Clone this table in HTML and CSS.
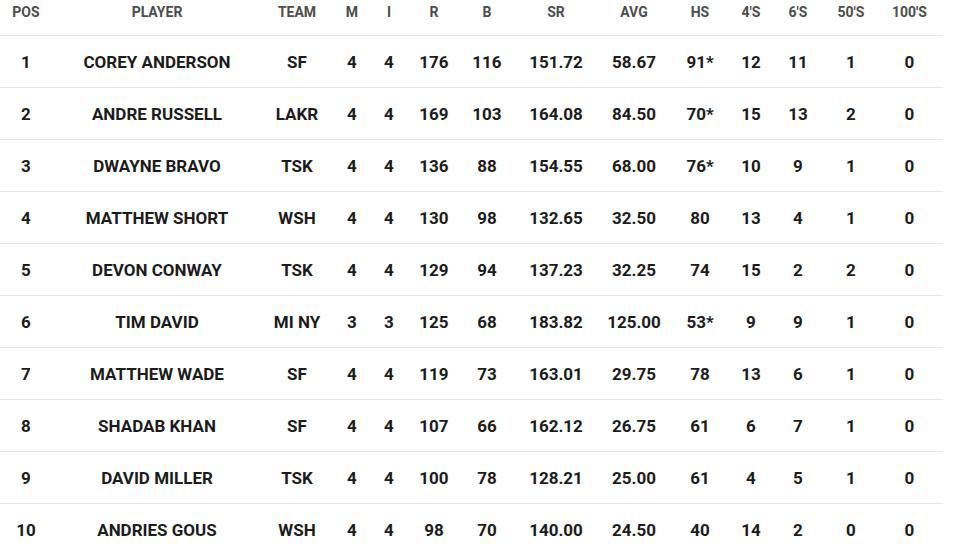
FILE: index.html
```html
<!DOCTYPE html>
<html>
<head>
<meta charset="utf-8">
<link rel="stylesheet" href="styles.css">
</head>
<body>
<table class="stats">
<colgroup>
<col class="c-pos"><col class="c-player"><col class="c-team"><col class="c-m"><col class="c-i"><col class="c-r"><col class="c-b"><col class="c-sr"><col class="c-avg"><col class="c-hs"><col class="c-4s"><col class="c-6s"><col class="c-50s"><col class="c-100s">
</colgroup>
<thead>
<tr><th>POS</th><th>PLAYER</th><th>TEAM</th><th>M</th><th>I</th><th>R</th><th>B</th><th>SR</th><th>AVG</th><th>HS</th><th>4'S</th><th>6'S</th><th>50'S</th><th>100'S</th></tr>
</thead>
<tbody>
<tr><td>1</td><td>COREY ANDERSON</td><td>SF</td><td>4</td><td>4</td><td>176</td><td>116</td><td>151.72</td><td>58.67</td><td>91*</td><td>12</td><td>11</td><td>1</td><td>0</td></tr>
<tr><td>2</td><td>ANDRE RUSSELL</td><td>LAKR</td><td>4</td><td>4</td><td>169</td><td>103</td><td>164.08</td><td>84.50</td><td>70*</td><td>15</td><td>13</td><td>2</td><td>0</td></tr>
<tr><td>3</td><td>DWAYNE BRAVO</td><td>TSK</td><td>4</td><td>4</td><td>136</td><td>88</td><td>154.55</td><td>68.00</td><td>76*</td><td>10</td><td>9</td><td>1</td><td>0</td></tr>
<tr><td>4</td><td>MATTHEW SHORT</td><td>WSH</td><td>4</td><td>4</td><td>130</td><td>98</td><td>132.65</td><td>32.50</td><td>80</td><td>13</td><td>4</td><td>1</td><td>0</td></tr>
<tr><td>5</td><td>DEVON CONWAY</td><td>TSK</td><td>4</td><td>4</td><td>129</td><td>94</td><td>137.23</td><td>32.25</td><td>74</td><td>15</td><td>2</td><td>2</td><td>0</td></tr>
<tr><td>6</td><td>TIM DAVID</td><td>MI NY</td><td>3</td><td>3</td><td>125</td><td>68</td><td>183.82</td><td>125.00</td><td>53*</td><td>9</td><td>9</td><td>1</td><td>0</td></tr>
<tr><td>7</td><td>MATTHEW WADE</td><td>SF</td><td>4</td><td>4</td><td>119</td><td>73</td><td>163.01</td><td>29.75</td><td>78</td><td>13</td><td>6</td><td>1</td><td>0</td></tr>
<tr><td>8</td><td>SHADAB KHAN</td><td>SF</td><td>4</td><td>4</td><td>107</td><td>66</td><td>162.12</td><td>26.75</td><td>61</td><td>6</td><td>7</td><td>1</td><td>0</td></tr>
<tr><td>9</td><td>DAVID MILLER</td><td>TSK</td><td>4</td><td>4</td><td>100</td><td>78</td><td>128.21</td><td>25.00</td><td>61</td><td>4</td><td>5</td><td>1</td><td>0</td></tr>
<tr><td>10</td><td>ANDRIES GOUS</td><td>WSH</td><td>4</td><td>4</td><td>98</td><td>70</td><td>140.00</td><td>24.50</td><td>40</td><td>14</td><td>2</td><td>0</td><td>0</td></tr>
</tbody>
</table>
</body>
</html>
```

FILE: styles.css
```css
html, body {
  margin: 0;
  padding: 0;
  background: #ffffff;
}

.stats {
  border-collapse: collapse;
  table-layout: fixed;
  width: 943px;
  font-family: Roboto, "Liberation Sans", sans-serif;
  font-weight: 700;
}

.c-pos { width: 52px; }
.c-player { width: 210px; }
.c-team { width: 70px; }
.c-m { width: 40px; }
.c-i { width: 34px; }
.c-r { width: 56px; }
.c-b { width: 50px; }
.c-sr { width: 88px; }
.c-avg { width: 68px; }
.c-hs { width: 64px; }
.c-4s { width: 38px; }
.c-6s { width: 56px; }
.c-50s { width: 50px; }
.c-100s { width: 67px; }

.stats th {
  height: 35px;
  padding: 0;
  vertical-align: top;
  text-align: center;
  font-size: 14px;
  line-height: 24px;
  color: #4d4d4d;
  white-space: nowrap;
}

.stats td {
  height: 51px;
  padding: 0;
  text-align: center;
  vertical-align: middle;
  font-size: 17px;
  color: #1c1c1c;
  border-top: 1px solid #e4e4e4;
  white-space: nowrap;
}
```
